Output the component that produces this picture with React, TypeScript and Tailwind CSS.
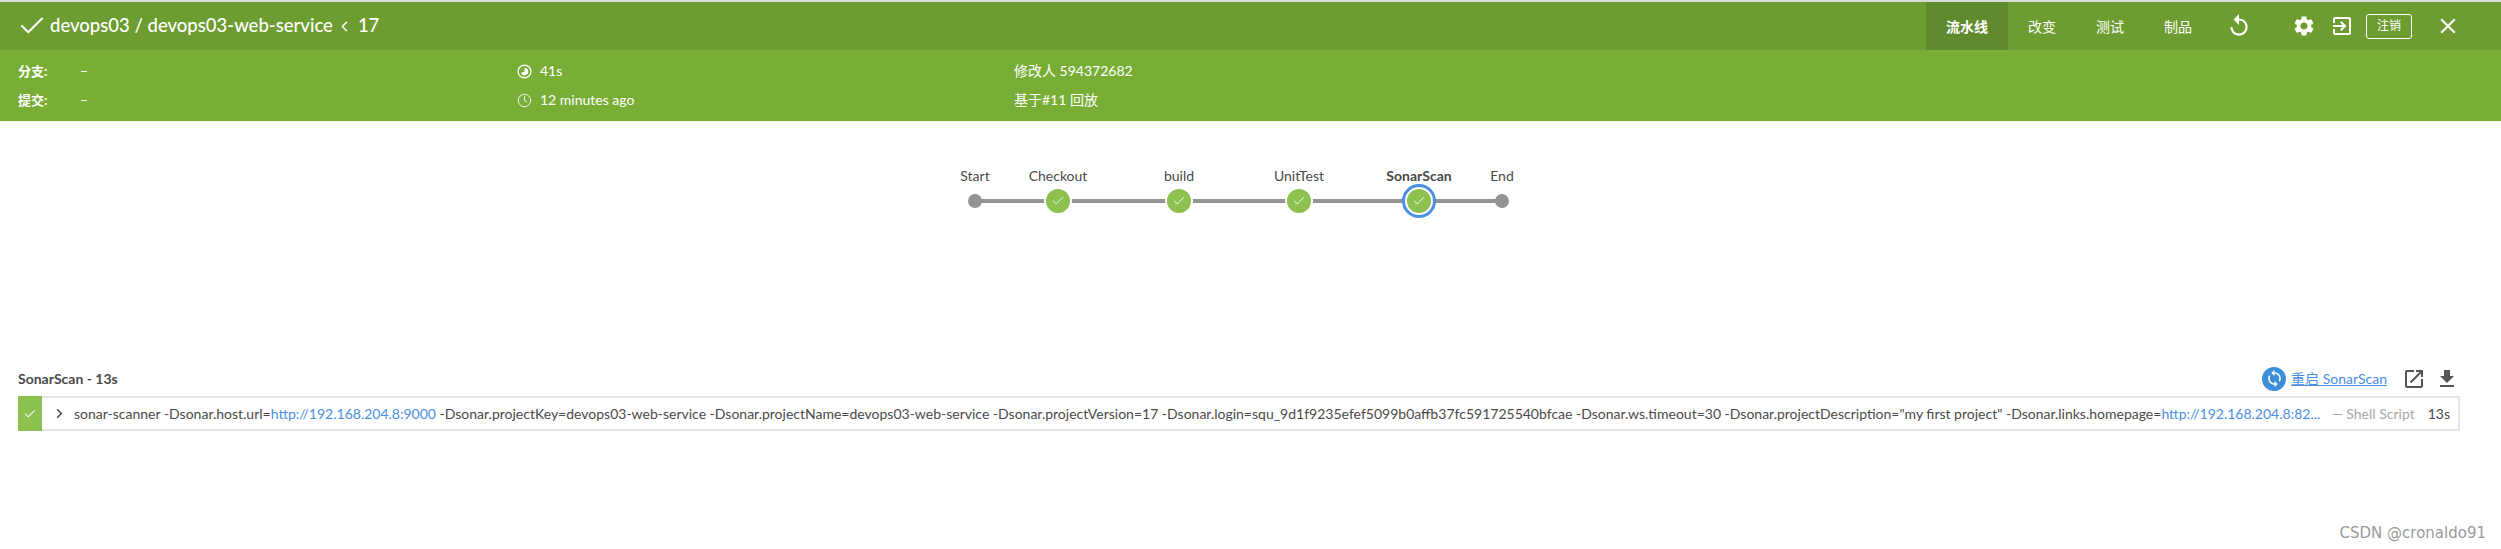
import { Check, ChevronLeft, ChevronRight, Clock } from 'lucide-react'
import { MdClose, MdExitToApp, MdFileDownload, MdOpenInNew, MdReplay, MdSettings, MdSync } from 'react-icons/md'

const font = { fontFamily: 'Lato, "Noto Sans CJK SC", sans-serif' }

const tabs = ['改变', '测试', '制品']

// x is the centre of the stage in the page
const stages = [
  { name: 'Start', x: 975, kind: 'dot' },
  { name: 'Checkout', x: 1058, kind: 'ok' },
  { name: 'build', x: 1179, kind: 'ok' },
  { name: 'UnitTest', x: 1299, kind: 'ok' },
  { name: 'SonarScan', x: 1419, kind: 'selected' },
  { name: 'End', x: 1502, kind: 'dot' },
]

function PieIcon() {
  return (
    <svg width="15" height="15" viewBox="0 0 14 14" className="shrink-0">
      <circle cx="7" cy="7" r="6" fill="none" stroke="white" strokeWidth="1.2" />
      <path d="M7 3.4A3.6 3.6 0 1 1 3.6 8.4L7 7Z" fill="white" />
    </svg>
  )
}

function PipelineGraph() {
  return (
    <div className="relative h-[243px] shrink-0">
      <div className="absolute left-[975px] top-[78px] h-[4px] w-[527px] bg-[#949393]" />
      {stages.map((s) => (
        <div key={s.name}>
          <span
            className={`absolute top-[46px] -translate-x-1/2 text-[14px] leading-[18px] whitespace-nowrap text-[#4a4a4a] ${
              s.kind === 'selected' ? 'font-bold' : ''
            }`}
            style={{ left: s.x }}
          >
            {s.name}
          </span>
          {s.kind === 'dot' ? (
            <div
              className="absolute top-[73px] h-[14px] w-[14px] -translate-x-1/2 rounded-full bg-[#949393]"
              style={{ left: s.x }}
            />
          ) : (
            <div
              className="absolute top-[66px] flex h-[28px] w-[28px] -translate-x-1/2 items-center justify-center rounded-full border-[2px] border-white bg-[#8cc04f]"
              style={{ left: s.x }}
            >
              <Check size={14} strokeWidth={1.6} className="text-white" />
            </div>
          )}
          {s.kind === 'selected' && (
            <div
              className="absolute top-[63px] h-[34px] w-[34px] -translate-x-1/2 rounded-full border-[3px] border-[#4a90e2]"
              style={{ left: s.x }}
            />
          )}
        </div>
      ))}
    </div>
  )
}

export default function App() {
  return (
    <div className="relative h-[549px] w-[2501px] overflow-hidden bg-white" style={font}>
      <div className="h-[2px] bg-[#d9d9d9]" />

      {/* Header */}
      <header className="flex h-[48px] items-center justify-between bg-[#6d9c31] text-white">
        <div className="flex items-center pl-[17px]">
          <Check size={30} strokeWidth={1.6} className="mr-[3px]" />
          <span className="-mt-[2px] text-[18.5px] font-medium leading-none">devops03 / devops03-web-service</span>
          <ChevronLeft size={17} strokeWidth={2} className="mx-[3px]" />
          <span className="-mt-[2px] ml-[2px] text-[18.5px] font-medium leading-none">17</span>
        </div>
        <div className="flex h-full items-center">
          <div className="flex h-full w-[82px] items-center justify-center bg-[#5f8a2e] text-[14px] font-bold">流水线</div>
          {tabs.map((t) => (
            <div key={t} className="flex h-full w-[68px] items-center justify-center text-[14px]">
              {t}
            </div>
          ))}
          <MdReplay size={26} className="ml-[14px]" />
          <MdSettings size={24} className="ml-[40px]" />
          <MdExitToApp size={24} className="ml-[14px]" />
          <div className="ml-[12px] flex h-[25px] w-[46px] items-center justify-center rounded-[3px] border border-white text-[12px]">
            注销
          </div>
          <MdClose size={26} className="ml-[23px] mr-[40px]" />
        </div>
      </header>

      {/* Run details */}
      <section className="flex h-[71px] flex-col justify-center gap-[11px] bg-[#78ae36] text-[14px] leading-[18px] text-white">
        <div className="flex items-center">
          <span className="w-[62px] pl-[18px] box-content font-bold text-[13px]">分支:</span>
          <span className="w-[437px]">–</span>
          <PieIcon />
          <span className="ml-[8px] w-[474px]">41s</span>
          <span>修改人 594372682</span>
        </div>
        <div className="flex items-center">
          <span className="w-[62px] pl-[18px] box-content font-bold text-[13px]">提交:</span>
          <span className="w-[437px]">–</span>
          <Clock size={15} strokeWidth={1.4} className="shrink-0" />
          <span className="ml-[8px] w-[474px]">12 minutes ago</span>
          <span>基于#11 回放</span>
        </div>
      </section>

      <PipelineGraph />

      {/* Stage detail */}
      <div className="flex h-[29px] items-center justify-between pl-[18px] pr-[42px]">
        <span className="text-[14px] font-bold text-[#4a4a4a]">SonarScan - 13s</span>
        <div className="flex items-center">
          <div className="flex h-[24px] w-[24px] items-center justify-center rounded-full bg-[#3b8fd9]">
            <MdSync size={19} className="text-white" />
          </div>
          <a className="ml-[5px] text-[14px] text-[#4a90e2] underline">重启 SonarScan</a>
          <MdOpenInNew size={24} className="ml-[15px] text-[#555555]" />
          <MdFileDownload size={24} className="ml-[9px] text-[#555555]" />
        </div>
      </div>

      <div className="ml-[18px] mt-[3px] flex h-[35px] w-[2442px] items-center border-y-2 border-r-2 border-[#e5e5e5] text-[14px] text-[#4a4a4a]">
        <div className="-my-[2px] flex h-[35px] w-[24px] shrink-0 items-center justify-center bg-[#8cc04f]">
          <Check size={14} strokeWidth={1.8} className="text-white" />
        </div>
        <ChevronRight size={15} strokeWidth={2.5} className="ml-[10px] shrink-0" />
        <span className="ml-[7px] whitespace-nowrap">
          sonar-scanner -Dsonar.host.url=<span className="text-[#4a90e2]">http://192.168.204.8:9000</span> -Dsonar.projectKey=devops03-web-service -Dsonar.projectName=devops03-web-service -Dsonar.projectVersion=17 -Dsonar.login=squ_9d1f9235efef5099b0affb37fc591725540bfcae -Dsonar.ws.timeout=30 -Dsonar.projectDescription="my first project" -Dsonar.links.homepage=<span className="text-[#4a90e2]">http://192.168.204.8:82...</span>
        </span>
        <span className="ml-auto whitespace-nowrap text-[#a8a8a8]">— Shell Script</span>
        <span className="ml-[13px] mr-[8px]">13s</span>
      </div>

      <span className="absolute right-[15px] top-[524px] text-[15px] leading-[18px] text-[#9a9a9a]" style={{ fontFamily: '"DejaVu Sans", sans-serif' }}>
        CSDN @cronaldo91
      </span>
    </div>
  )
}
